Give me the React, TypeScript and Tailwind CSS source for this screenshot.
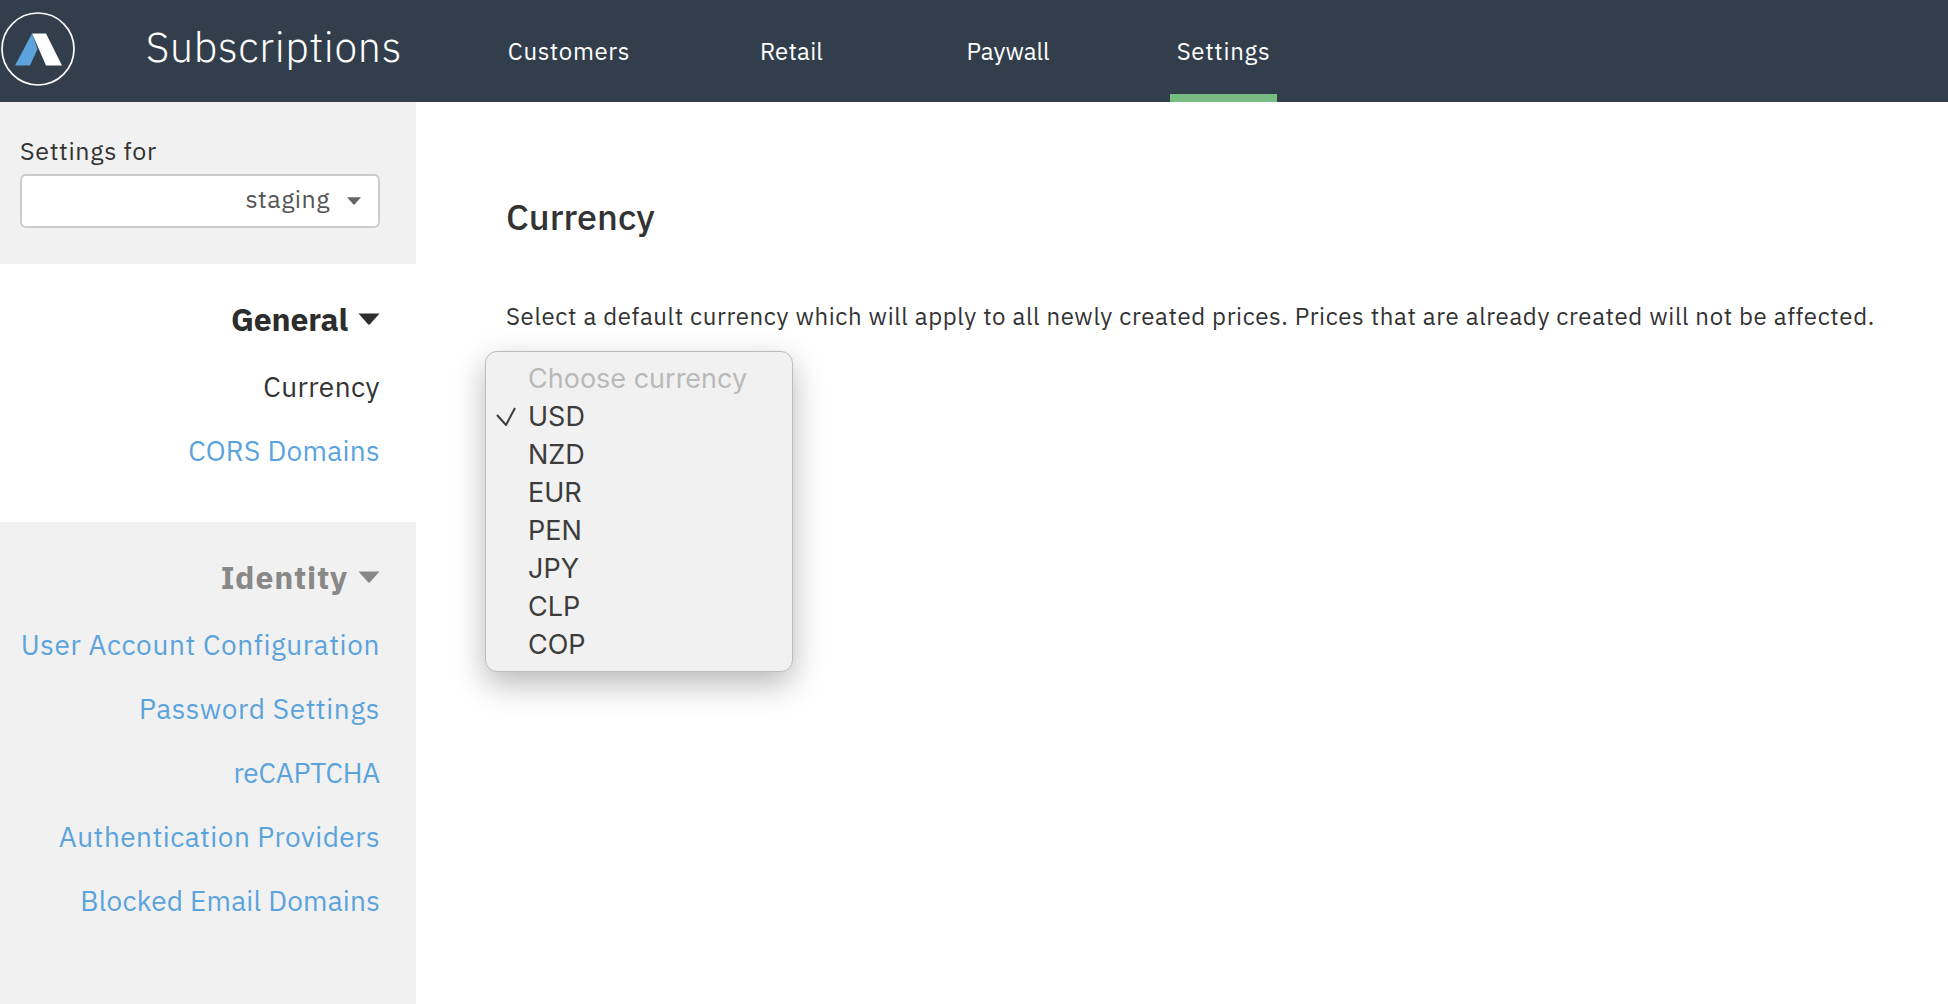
const font = "font-['IBM_Plex_Sans','Noto_Sans','Liberation_Sans',sans-serif]";

function Caret({ className }: { className: string }) {
  return (
    <svg viewBox="0 0 22 12" className={className} aria-hidden="true">
      <path d="M0.5 0.5H21.5L12.2 11a1.6 1.6 0 0 1-2.4 0Z" fill="currentColor" />
    </svg>
  );
}

function Logo() {
  return (
    <svg viewBox="0 0 76 76" className="h-[76px] w-[76px] shrink-0" aria-hidden="true">
      <circle cx="37" cy="38" r="36" fill="none" stroke="#fff" strokeWidth="1.7" />
      <path d="M14 54.5 31 22.5 36.5 38 29 54.5Z" fill="#5ba3dc" />
      <path d="M31 22.5H45L61 54.5H45Z" fill="#fff" />
    </svg>
  );
}

function NavItem({ label, width, active, tracking }: { label: string; width: string; active?: boolean; tracking: string }) {
  return (
    <a className={`relative flex h-[102px] items-center justify-center pb-[1px] text-[24px] text-white ${tracking} ${width}`}>
      {label}
      {active && <span className="absolute inset-x-0 bottom-0 h-2 bg-[#77bd83]" />}
    </a>
  );
}

function SideLink({ label, tracking }: { label: string; tracking: string }) {
  return <a className={`block h-16 pr-9 text-right text-[28px] leading-[64px] text-[#5ba3dc] ${tracking}`}>{label}</a>;
}

const options = ["USD", "NZD", "EUR", "PEN", "JPY", "CLP", "COP"];

export default function App() {
  return (
    <div className={`flex h-[1004px] w-[1948px] flex-col overflow-hidden bg-white text-[#333] ${font}`}>
      <header className="flex h-[102px] shrink-0 items-center bg-[#323e4b]">
        <div className="flex w-[146px] items-center pb-[4px] pl-px"><Logo /></div>
        <h1 className="w-[362px] pb-[9px] text-[41px] font-light tracking-[0.7px] text-white">Subscriptions</h1>
        <nav className="flex items-center">
          <NavItem label="Customers" width="w-[122px]" tracking="tracking-[0.65px]" />
          <div className="ml-[130px]"><NavItem label="Retail" width="w-[63px]" tracking="tracking-[0.2px]" /></div>
          <div className="ml-[143px]"><NavItem label="Paywall" width="w-[84px]" tracking="tracking-[0px]" /></div>
          <div className="ml-[120px]"><NavItem label="Settings" width="w-[107px]" tracking="tracking-[0.75px]" active /></div>
        </nav>
      </header>
      <div className="flex min-h-0 flex-1">
        <aside className="flex w-[416px] shrink-0 flex-col">
          <div className="h-[162px] bg-[#f1f1f1] pl-5 pr-9 pt-[31px]">
            <div className="text-[25px] leading-[36px] tracking-[0.7px] text-[#333]">Settings for</div>
            <div className="mt-[5px] flex h-[54px] items-center justify-end rounded-[6px] border-2 border-[#cbcbcb] bg-white pr-[16px]">
              <span className="pb-[5px] text-[25px] tracking-[0.5px] text-[#555]">staging</span>
              <Caret className="ml-4 h-2 w-4 text-[#666]" />
            </div>
          </div>
          <section className="h-[258px] bg-white pt-[29px]">
            <div className="flex h-[52px] items-center justify-end pr-9 text-[32px] font-bold tracking-[-0.2px] text-[#2d2d2d]">
              General
              <Caret className="ml-[10px] h-3 w-[22px] text-[#2d2d2d]" />
            </div>
            <div className="mt-[10px] block h-16 pr-9 text-right text-[28px] leading-[64px] tracking-[0.45px] text-[#333]">Currency</div>
            <SideLink label="CORS Domains" tracking="tracking-[0.3px]" />
          </section>
          <section className="flex-1 bg-[#f1f1f1] pt-[29px]">
            <div className="flex h-[52px] items-center justify-end pr-9 text-[32px] font-bold tracking-[0.8px] text-[#888]">
              Identity
              <Caret className="ml-[10px] h-3 w-[22px] text-[#888]" />
            </div>
            <div className="mt-[10px]">
              <SideLink label="User Account Configuration" tracking="tracking-[0.6px]" />
              <SideLink label="Password Settings" tracking="tracking-[0.6px]" />
              <SideLink label="reCAPTCHA" tracking="tracking-[-0.2px]" />
              <SideLink label="Authentication Providers" tracking="tracking-[0.45px]" />
              <SideLink label="Blocked Email Domains" tracking="tracking-[0.2px]" />
            </div>
          </section>
        </aside>
        <main className="relative flex-1 pl-[90px] pt-[90px]">
          <h2 className="text-[36px] font-medium leading-[50px] text-[#333]">Currency</h2>
          <p className="mt-[56px] text-[24px] leading-[36px] tracking-[0.63px] text-[#333]">
            Select a default currency which will apply to all newly created prices. Prices that are already created will not be affected.
          </p>
          <div className="absolute left-[69px] top-[249px] h-[321px] w-[308px] rounded-[12px] border border-[#bcbcbc] bg-[#f1f1f1] pt-[7.5px] font-['Inter',sans-serif] text-[27px] leading-[38px] text-[#3c3c3c] shadow-[0_12px_32px_rgba(0,0,0,0.28)]">
            <div className="pl-[42px] text-[#b9b9b9]">Choose currency</div>
            {options.map((o) => (
              <div key={o} className="relative pl-[42px]">
                {o === "USD" && (
                  <svg viewBox="0 0 20 20" className="absolute left-[10px] top-[8px] h-5 w-5" aria-hidden="true">
                    <path d="M1 9l9 10L19 2" fill="none" stroke="#3c3c3c" strokeWidth="2" />
                  </svg>
                )}
                {o}
              </div>
            ))}
          </div>
        </main>
      </div>
    </div>
  );
}
